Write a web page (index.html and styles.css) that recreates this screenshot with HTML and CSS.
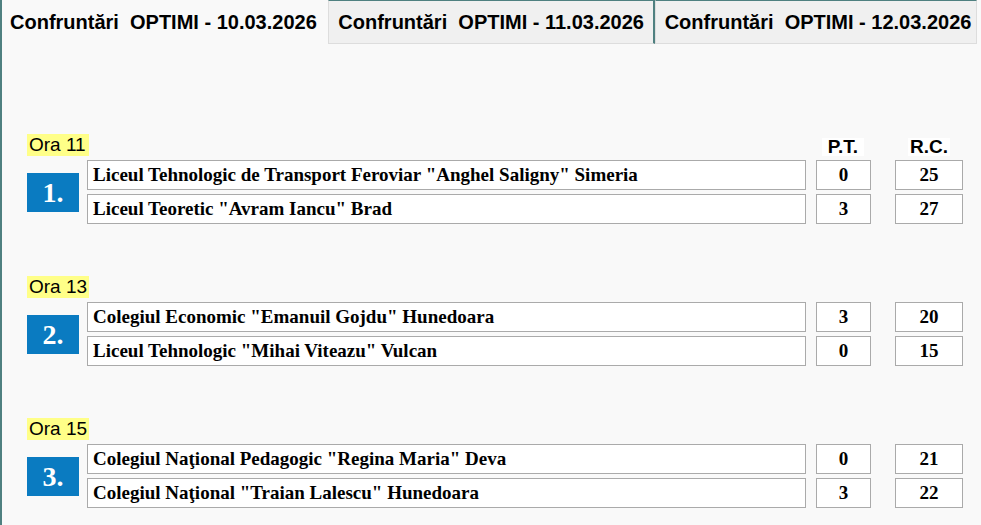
FILE: index.html
```html
<!DOCTYPE html>
<html>
<head>
<meta charset="utf-8">
<link rel="stylesheet" href="styles.css">
</head>
<body>
<div class="page">
  <div class="tabs">
    <div class="tab active">Confruntări&nbsp; OPTIMI - 10.03.2026</div>
    <div class="tab">Confruntări&nbsp; OPTIMI - 11.03.2026</div>
    <div class="tab last">Confruntări&nbsp; OPTIMI - 12.03.2026</div>
  </div>
  <div class="content">
    <div class="block first">
      <div class="head">
        <span class="ora">Ora 11</span>
        <span class="hcol pt">P.T.</span>
        <span class="hcol rc">R.C.</span>
      </div>
      <div class="match">
        <div class="num">1.</div>
        <div class="rows">
          <div class="row"><div class="name">Liceul Tehnologic de Transport Feroviar "Anghel Saligny" Simeria</div><div class="cell pt">0</div><div class="cell rc">25</div></div>
          <div class="row"><div class="name">Liceul Teoretic "Avram Iancu" Brad</div><div class="cell pt">3</div><div class="cell rc">27</div></div>
        </div>
      </div>
    </div>
    <div class="block">
      <div class="head"><span class="ora">Ora 13</span></div>
      <div class="match">
        <div class="num">2.</div>
        <div class="rows">
          <div class="row"><div class="name">Colegiul Economic "Emanuil Gojdu" Hunedoara</div><div class="cell pt">3</div><div class="cell rc">20</div></div>
          <div class="row"><div class="name">Liceul Tehnologic "Mihai Viteazu" Vulcan</div><div class="cell pt">0</div><div class="cell rc">15</div></div>
        </div>
      </div>
    </div>
    <div class="block">
      <div class="head"><span class="ora">Ora 15</span></div>
      <div class="match">
        <div class="num">3.</div>
        <div class="rows">
          <div class="row"><div class="name">Colegiul Naţional Pedagogic "Regina Maria" Deva</div><div class="cell pt">0</div><div class="cell rc">21</div></div>
          <div class="row"><div class="name">Colegiul Naţional "Traian Lalescu" Hunedoara</div><div class="cell pt">3</div><div class="cell rc">22</div></div>
        </div>
      </div>
    </div>
  </div>
</div>
</body>
</html>
```

FILE: styles.css
```css
html, body {
  margin: 0;
  padding: 0;
  background: #f9f9f9;
}
.page {
  width: 977px;
  height: 525px;
  border-left: 2px solid #4f8080;
  box-sizing: border-box;
  background: #f9f9f9;
  font-family: "Liberation Sans", Arial, sans-serif;
  color: #000;
}
.tabs {
  display: flex;
  height: 44px;
}
.tab {
  box-sizing: border-box;
  height: 44px;
  padding: 9px 0 0 9px;
  font-size: 20px;
  line-height: 24px;
  font-weight: bold;
  white-space: nowrap;
  background: #f0f0f0;
  border-top: 1px solid #4f8080;
  border-bottom: 1px solid #dddddd;
  border-left: 1px solid #dddddd;
  border-right: 2px solid #4f8080;
  width: 327px;
}
.tab.active {
  width: 327px;
  background: #f9f9f9;
  border: none;
  padding-left: 8px;
  padding-top: 10px;
}
.tab.last {
  width: 323px;
  border-right: 1px solid #dddddd;
}
.content {
  padding: 90px 0 0 25px;
}
.block {
  margin-bottom: 52px;
}
.head {
  display: flex;
  align-items: flex-end;
  height: 22px;
  margin-bottom: 4px;
}
.ora {
  background: #ffff88;
  font-size: 19px;
  line-height: 22px;
  padding: 0 2px 0 2px;
  width: 58px;
  white-space: nowrap;
}
.hcol {
  font-weight: bold;
  font-size: 19px;
  background: #ffffff;
  line-height: 18px;
  text-align: center;
  padding: 0 1px;
  box-sizing: border-box;
}
.hcol.pt {
  width: 42px;
  margin-left: 733px;
}
.hcol.rc {
  width: 42px;
  margin-left: 44px;
}
.match {
  display: flex;
  align-items: center;
}
.num {
  width: 52px;
  height: 39px;
  background: #0a7bc1;
  color: #fff;
  font-family: "Liberation Serif", "Times New Roman", serif;
  font-weight: bold;
  font-size: 28px;
  line-height: 39px;
  text-align: center;
  margin-right: 8px;
}
.rows {
  display: flex;
  flex-direction: column;
  gap: 4px;
}
.row {
  display: flex;
  align-items: center;
}
.name, .cell {
  box-sizing: border-box;
  height: 30px;
  background: #fff;
  border: 1px solid #aaaaaa;
  font-family: "Liberation Serif", "Times New Roman", serif;
  font-weight: bold;
  font-size: 19px;
  line-height: 28px;
}
.name {
  width: 719px;
  padding-left: 5px;
  white-space: nowrap;
}
.cell {
  text-align: center;
}
.cell.pt {
  width: 55px;
  margin-left: 10px;
}
.cell.rc {
  width: 68px;
  margin-left: 24px;
}
```
